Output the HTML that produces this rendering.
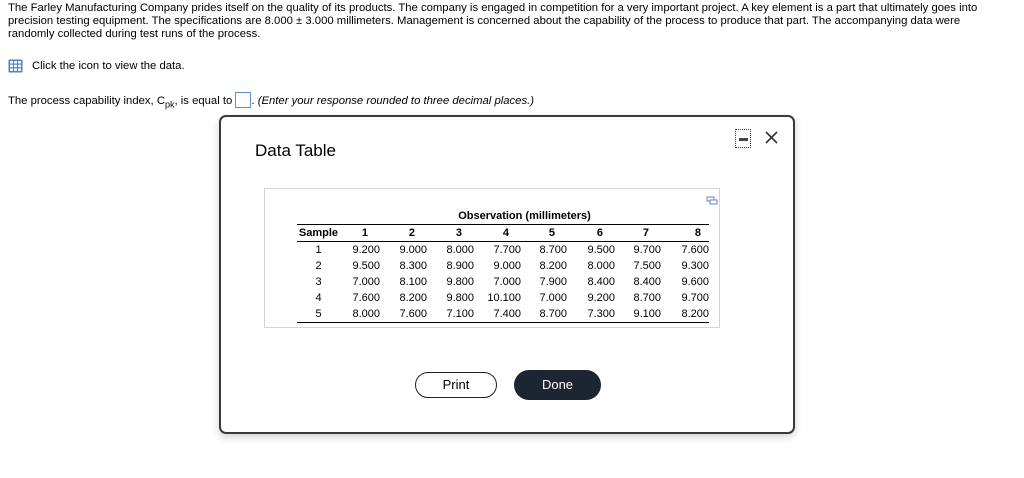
<!DOCTYPE html>
<html><head><meta charset="utf-8"><style>
body{margin:0;width:1024px;height:478px;background:#fff;font-family:"Liberation Sans",Arial,sans-serif;color:#000;position:relative;overflow:hidden}
.p{position:absolute;left:8px;font-size:11.3px;line-height:13px}
.dlg{position:absolute;left:219px;top:115px;width:572px;height:315px;border:2px solid #3a3a3a;border-radius:7px;box-shadow:0 3px 8px rgba(0,0,0,.18);background:#fff}
.inner{position:absolute;left:264px;top:188px;width:454px;height:138px;border:1px solid #d4d4d4}
table{position:absolute;left:297px;top:208px;border-collapse:collapse;font-size:11px;table-layout:fixed;width:412px}
td,th{padding:0;height:16px;line-height:16px;text-align:right}
th{font-weight:bold;padding-right:12px}
td:first-child,th:first-child{text-align:center;padding-right:0}
.btn{position:absolute;top:372px;height:26px;border-radius:14px;font-size:13px;line-height:26px;text-align:center}
</style></head><body>
<div class="p" style="top:2px;width:985px">The Farley Manufacturing Company prides itself on the quality of its products. The company is engaged in competition for a very important project. A key element is a part that ultimately goes into precision testing equipment. The specifications are 8.000 ± 3.000 millimeters. Management is concerned about the capability of the process to produce that part. The accompanying data were randomly collected during test runs of the process.</div>
<svg style="position:absolute;left:8px;top:59px" width="15" height="14" viewBox="0 0 15 14"><rect x="0.5" y="0.5" width="14" height="13" rx="1" fill="#4a7fd6"/><g fill="#fff"><rect x="2" y="2" width="3" height="2.5"/><rect x="6" y="2" width="3" height="2.5"/><rect x="10" y="2" width="3" height="2.5"/><rect x="2" y="5.7" width="3" height="2.5"/><rect x="6" y="5.7" width="3" height="2.5"/><rect x="10" y="5.7" width="3" height="2.5"/><rect x="2" y="9.4" width="3" height="2.5"/><rect x="6" y="9.4" width="3" height="2.5"/><rect x="10" y="9.4" width="3" height="2.5"/></g></svg>
<div class="p" style="left:32px;top:60px">Click the icon to view the data.</div>
<div class="p" style="top:92px">The process capability index, C<sub style="font-size:9px;line-height:0">pk</sub>, is equal to <span style="display:inline-block;width:14px;height:14px;border:1px solid #5a8fc8;vertical-align:-4px"></span>. <i>(Enter your response rounded to three decimal places.)</i></div>
<div class="dlg"></div>
<div style="position:absolute;left:255px;top:141px;font-size:17px">Data Table</div>
<div style="position:absolute;left:735px;top:129px;width:16px;height:19px;border:1px dotted #333;box-sizing:border-box"><div style="position:absolute;left:3px;top:8px;width:9px;height:3px;background:#444"></div></div>
<svg style="position:absolute;left:765px;top:131px" width="13" height="13" viewBox="0 0 13 13"><path d="M1 1L12 12M12 1L1 12" stroke="#333" stroke-width="1.6"/></svg>
<div class="inner"></div>
<svg style="position:absolute;left:706px;top:196px" width="12" height="10" viewBox="0 0 12 10"><rect x="1" y="1" width="7" height="4" fill="none" stroke="#6a7fd0"/><rect x="4" y="4" width="7" height="4" fill="#fff" stroke="#6a7fd0"/></svg>
<table>
<colgroup><col style="width:43px"><col style="width:40px"><col style="width:47px"><col style="width:47px"><col style="width:47px"><col style="width:46px"><col style="width:48px"><col style="width:46px"><col style="width:48px"></colgroup>
<tr><td></td><th colspan="8" style="text-align:center;padding-right:0">Observation (millimeters)</th></tr>
<tr style="border-top:1px solid #000;border-bottom:1px solid #000"><th>Sample</th><th>1</th><th>2</th><th>3</th><th>4</th><th>5</th><th>6</th><th>7</th><th style="padding-right:8px">8</th></tr>
<tr><td>1</td><td>9.200</td><td>9.000</td><td>8.000</td><td>7.700</td><td>8.700</td><td>9.500</td><td>9.700</td><td>7.600</td></tr>
<tr><td>2</td><td>9.500</td><td>8.300</td><td>8.900</td><td>9.000</td><td>8.200</td><td>8.000</td><td>7.500</td><td>9.300</td></tr>
<tr><td>3</td><td>7.000</td><td>8.100</td><td>9.800</td><td>7.000</td><td>7.900</td><td>8.400</td><td>8.400</td><td>9.600</td></tr>
<tr><td>4</td><td>7.600</td><td>8.200</td><td>9.800</td><td>10.100</td><td>7.000</td><td>9.200</td><td>8.700</td><td>9.700</td></tr>
<tr style="border-bottom:1px solid #000"><td>5</td><td>8.000</td><td>7.600</td><td>7.100</td><td>7.400</td><td>8.700</td><td>7.300</td><td>9.100</td><td>8.200</td></tr>
</table>
<div class="btn" style="left:415px;width:80px;border:1.5px solid #222;height:24px;line-height:24px">Print</div>
<div class="btn" style="left:514px;width:87px;height:30px;line-height:30px;top:370px;border-radius:15px;background:#1d2533;color:#fff">Done</div>
</body></html>
